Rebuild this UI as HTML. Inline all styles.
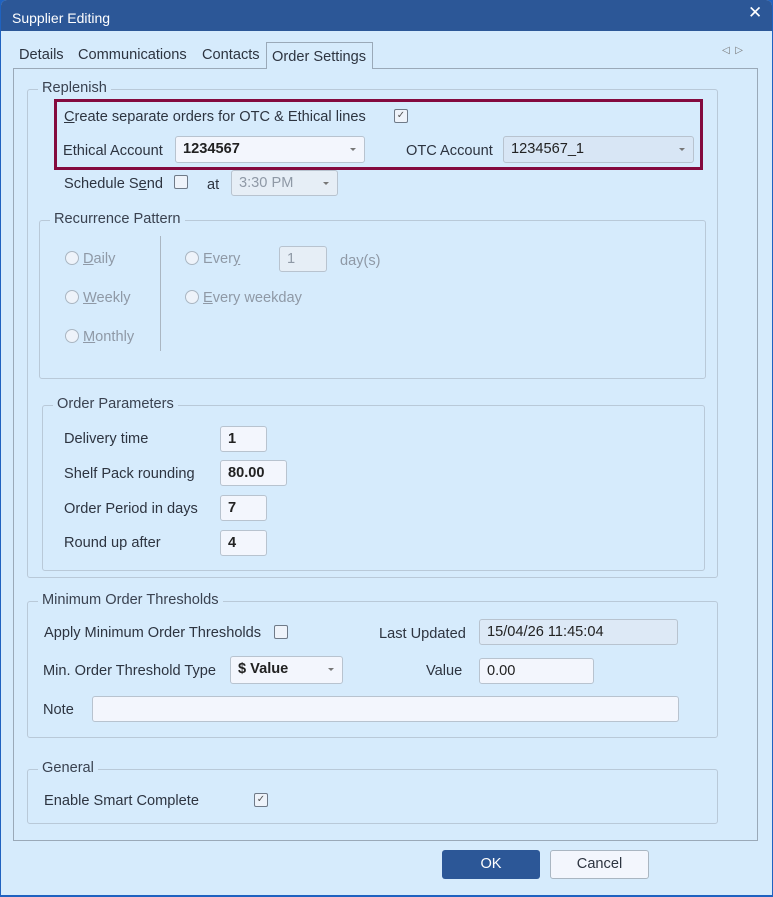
<!DOCTYPE html>
<html><head><style>
*{box-sizing:border-box;margin:0;padding:0}
body{width:773px;height:897px;background:#1f62c0;font-family:"Liberation Sans",sans-serif;font-size:14.6px;color:#2d3440;position:relative;overflow:hidden}
.a{position:absolute;white-space:nowrap}
.win{position:absolute;left:1px;top:0;width:771px;height:895px;background:#d6ebfc;border-radius:6px 6px 0 0;overflow:hidden}
.title{position:absolute;left:0;top:0;width:771px;height:31px;background:#2c5797;color:#fff}
.grp{position:absolute;border:1px solid #b9c9d8;border-radius:3px}
.lg{position:absolute;background:#d6ebfc;padding:0 4px;top:-10px;left:10px;color:#3a4250}
.in{position:absolute;background:#f3f6fd;border:1px solid #b8c3cf;border-radius:3px;padding-left:7px;line-height:24px;color:#222;font-weight:bold}
.cb{position:absolute;width:14px;height:14px;border:1px solid #6f7a88;border-radius:2px;background:#eef3fa;font-size:10px;line-height:12px;text-align:center;color:#555}
.rd{position:absolute;width:14px;height:14px;border:1px solid #aab6c2;border-radius:50%;background:#eef3fa}
.dis{color:#8f99a6}
.dd::after{content:"";position:absolute;right:8px;top:11px;border:3px solid transparent;border-top:3px solid #777}
</style></head><body>
<div class="win">
<div class="title"><span class="a" style="left:11px;top:10px;font-size:14px">Supplier Editing</span><span class="a" style="left:747px;top:3px;font-size:17px">✕</span></div>
<span class="a" style="left:18px;top:47px">Details</span>
<span class="a" style="left:77px;top:47px">Communications</span>
<span class="a" style="left:201px;top:47px">Contacts</span>
<div class="a" style="left:265px;top:42px;width:107px;height:27px;border:1px solid #9aa9b8;border-bottom:none;background:#d6ebfc;z-index:2"><span class="a" style="left:5px;top:6px">Order Settings</span></div>
<span class="a" style="left:721px;top:45px;font-size:10px;color:#777">◁ &nbsp;▷</span>
<div class="a" style="left:12px;top:68px;width:745px;height:773px;border:1px solid #9aa9b8"></div>

<div class="grp" style="left:26px;top:89px;width:691px;height:489px"><span class="lg">Replenish</span></div>
<div class="a" style="left:53px;top:99px;width:649px;height:71px;border:3px solid #840a3e"></div>
<span class="a" style="left:63px;top:109px"><u>C</u>reate separate orders for OTC &amp; Ethical lines</span>
<div class="cb" style="left:393px;top:109px">✓</div>
<span class="a" style="left:62px;top:143px">Ethical Account</span>
<div class="in dd" style="left:174px;top:136px;width:190px;height:27px">1234567</div>
<span class="a" style="left:405px;top:143px">OTC Account</span>
<div class="in dd" style="left:502px;top:136px;width:191px;height:27px;background:#d8e6f5;font-weight:normal">1234567_1</div>
<span class="a" style="left:63px;top:176px">Schedule S<u>e</u>nd</span>
<div class="cb" style="left:173px;top:175px"></div>
<span class="a" style="left:206px;top:177px">at</span>
<div class="in dd dis" style="left:230px;top:170px;width:107px;height:26px;font-weight:normal;background:#e6eef6;color:#8f99a6">3:30 PM</div>

<div class="grp" style="left:38px;top:220px;width:667px;height:159px"><span class="lg">Recurrence Pattern</span></div>
<div class="rd" style="left:64px;top:251px"></div><span class="a dis" style="left:82px;top:251px"><u>D</u>aily</span>
<div class="rd" style="left:64px;top:290px"></div><span class="a dis" style="left:82px;top:290px"><u>W</u>eekly</span>
<div class="rd" style="left:64px;top:329px"></div><span class="a dis" style="left:82px;top:329px"><u>M</u>onthly</span>
<div class="a" style="left:159px;top:236px;width:1px;height:115px;background:#aab6c2"></div>
<div class="rd" style="left:184px;top:251px"></div><span class="a dis" style="left:202px;top:251px">Ever<u>y</u></span>
<div class="in dis" style="left:278px;top:246px;width:48px;height:26px;font-weight:normal;color:#8f99a6;background:#e6eef6">1</div>
<span class="a dis" style="left:339px;top:253px">day(s)</span>
<div class="rd" style="left:184px;top:290px"></div><span class="a dis" style="left:202px;top:290px"><u>E</u>very weekday</span>

<div class="grp" style="left:41px;top:405px;width:663px;height:166px"><span class="lg">Order Parameters</span></div>
<span class="a" style="left:63px;top:431px">Delivery time</span><div class="in" style="left:219px;top:426px;width:47px;height:26px">1</div>
<span class="a" style="left:63px;top:466px">Shelf Pack rounding</span><div class="in" style="left:219px;top:460px;width:67px;height:26px">80.00</div>
<span class="a" style="left:63px;top:501px">Order Period in days</span><div class="in" style="left:219px;top:495px;width:47px;height:26px">7</div>
<span class="a" style="left:63px;top:535px">Round up after</span><div class="in" style="left:219px;top:530px;width:47px;height:26px">4</div>

<div class="grp" style="left:26px;top:601px;width:691px;height:137px"><span class="lg">Minimum Order Thresholds</span></div>
<span class="a" style="left:43px;top:625px">Apply Minimum Order Thresholds</span><div class="cb" style="left:273px;top:625px"></div>
<span class="a" style="left:378px;top:626px">Last Updated</span>
<div class="in" style="left:478px;top:619px;width:199px;height:26px;background:#dde9f6;font-weight:normal">15/04/26 11:45:04</div>
<span class="a" style="left:42px;top:663px">Min. Order Threshold Type</span>
<div class="in dd" style="left:229px;top:656px;width:113px;height:28px">$ Value</div>
<span class="a" style="left:425px;top:663px">Value</span>
<div class="in" style="left:478px;top:658px;width:115px;height:26px;font-weight:normal">0.00</div>
<span class="a" style="left:42px;top:702px">Note</span>
<div class="in" style="left:91px;top:696px;width:587px;height:26px"></div>

<div class="grp" style="left:26px;top:769px;width:691px;height:55px"><span class="lg">General</span></div>
<span class="a" style="left:43px;top:793px">Enable Smart Complete</span><div class="cb" style="left:253px;top:793px">✓</div>

<div class="a" style="left:441px;top:850px;width:98px;height:29px;background:#2c5797;border-radius:3px;color:#fff;text-align:center;line-height:29px">OK</div>
<div class="a" style="left:549px;top:850px;width:99px;height:29px;background:#f3f6fd;border:1px solid #aab6c2;border-radius:3px;text-align:center;line-height:27px">Cancel</div>
</div>
</body></html>
